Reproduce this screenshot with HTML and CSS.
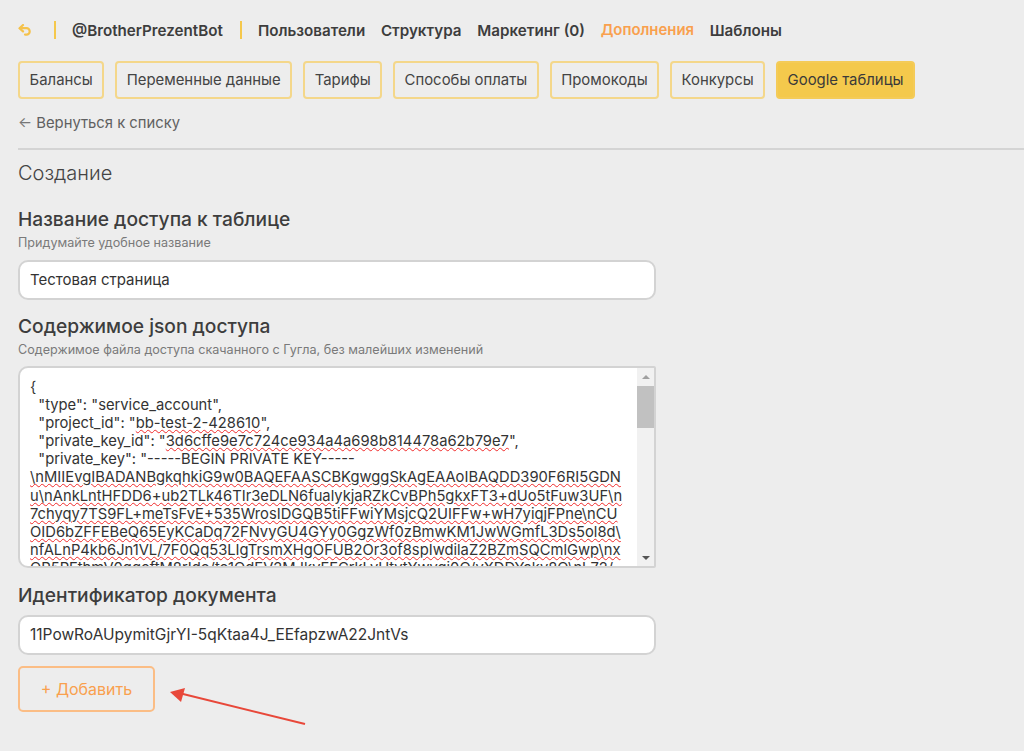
FILE: index.html
```html
<!DOCTYPE html>
<html lang="en">
<head>
    <meta charset="UTF-8">
    <meta name="viewport" content="width=device-width, initial-scale=1.0">
    <title>Google таблицы</title>
    <link rel="stylesheet" href="styles.css">
</head>
<body>
    <div class="container">
        <nav class="top-nav">
            <a class="back-icon">
                <svg width="14" height="12" viewBox="0 0 14 12" fill="none" stroke="#f5c24c" stroke-width="2.2" stroke-linecap="round" stroke-linejoin="round"><path d="M5 1 1.5 4.2 5 7.4"/><path d="M2 4.2h6.5a3.2 3.2 0 0 1 0 6.4H7"/></svg>
            </a>
            <span class="nav-divider first"></span>
            <span class="bot-name">@BrotherPrezentBot</span>
            <span class="nav-divider"></span>
            <a class="nav-link">Пользователи</a>
            <a class="nav-link">Структура</a>
            <a class="nav-link">Маркетинг (0)</a>
            <a class="nav-link active">Дополнения</a>
            <a class="nav-link">Шаблоны</a>
        </nav>

        <div class="tabs">
            <a class="tab">Балансы</a>
            <a class="tab">Переменные данные</a>
            <a class="tab">Тарифы</a>
            <a class="tab">Способы оплаты</a>
            <a class="tab">Промокоды</a>
            <a class="tab">Конкурсы</a>
            <a class="tab active">Google таблицы</a>
        </div>

        <a class="back-link"><span class="back-arrow">←</span> Вернуться к списку</a>
        <hr class="divider">

        <h1 class="page-title">Создание</h1>

        <section class="field">
            <h2 class="field-title">Название доступа к таблице</h2>
            <p class="field-hint">Придумайте удобное название</p>
            <div class="input">Тестовая страница</div>
        </section>

        <section class="field">
            <h2 class="field-title">Содержимое json доступа</h2>
            <p class="field-hint">Содержимое файла доступа скачанного с Гугла, без малейших изменений</p>
            <div class="textarea">
                <div class="textarea-text">
                    <div class="code-line">{</div>
                    <div class="code-line">  "type": "service_account",</div>
                    <div class="code-line">  "project_id": "<span class="typo">bb-test-2-428610</span>",</div>
                    <div class="code-line">  "private_key_id": "<span class="typo">3d6cffe9e7c724ce934a4a698b814478a62b79e7</span>",</div>
                    <div class="code-line">  "private_key": "-----BEGIN PRIVATE KEY-----</div>
                    <div class="code-line typo">\nMIIEvgIBADANBgkqhkiG9w0BAQEFAASCBKgwggSkAgEAAoIBAQDD390F6RI5GDN</div>
                    <div class="code-line typo">u\nAnkLntHFDD6+ub2TLk46TIr3eDLN6fualykjaRZkCvBPh5gkxFT3+dUo5tFuw3UF\n</div>
                    <div class="code-line typo">7chyqy7TS9FL+meTsFvE+535WrosIDGQB5tiFFwiYMsjcQ2UIFFw+wH7yiqjFPne\nCU</div>
                    <div class="code-line typo">OID6bZFFEBeQ65EyKCaDq72FNvyGU4GYy0GgzWf0zBmwKM1JwWGmfL3Ds5ol8d\</div>
                    <div class="code-line typo">nfALnP4kb6Jn1VL/7F0Qq53LIgTrsmXHgOFUB2Or3of8spIwdilaZ2BZmSQCmlGwp\nx</div>
                    <div class="code-line typo">OP5PFthmV0qqoftM8rIdo/to1OdEV2MJkyFFCrkLvUtytYwyqi0Q/yXDDYaky8Q\nL72/</div>
                </div>
                <div class="scrollbar">
                    <span class="scroll-up"></span>
                    <span class="scroll-thumb"></span>
                    <span class="scroll-down"></span>
                </div>
            </div>
        </section>

        <section class="field field-last">
            <h2 class="field-title">Идентификатор документа</h2>
            <div class="input input-id">11PowRoAUpymitGjrYI-5qKtaa4J_EEfapzwA22JntVs</div>
        </section>

        <button class="add-btn">+ Добавить</button>
    </div>

    <svg class="annotation" width="150" height="45" viewBox="0 0 150 45">
        <path d="M140 39 14 8" stroke="#e8483a" stroke-width="2" fill="none"/>
        <path d="M5 7 20 3 16 17Z" fill="#e8483a"/>
    </svg>
</body>
</html>
```

FILE: styles.css
```css
* {
    margin: 0;
    padding: 0;
    box-sizing: border-box;
    font-family: 'Inter', sans-serif;
}

html, body {
    height: 100%;
}

body {
    background: #ededed;
    color: #3b3b3b;
    overflow: hidden;
    position: relative;
}

.container {
    padding: 20px 0 0 18px;
}

.top-nav {
    display: flex;
    align-items: center;
    height: 20px;
    font-size: 15.2px;
    font-weight: 600;
    color: #3d3d3d;
}

.back-icon {
    display: flex;
    width: 36px;
}

.nav-divider {
    width: 2px;
    height: 18px;
    background: #f5c84c;
    margin: 0 16px 0 0;
}

.bot-name {
    margin-right: 17px;
}

.nav-link {
    margin-right: 15.7px;
}

.nav-link.active {
    font-size: 14.9px;
    color: #f9a04e;
}

.tabs {
    display: flex;
    gap: 10.7px;
    margin-top: 21px;
}

.tab {
    display: block;
    height: 38px;
    line-height: 35px;
    padding: 0 9.6px;
    border: 2px solid #f4d78a;
    border-radius: 4px;
    font-size: 14.9px;
    color: #444;
}

.tab.active {
    background: #f4c94c;
    border-color: #f4cb58;
    color: #3a3a3a;
}

.back-link {
    display: block;
    margin-top: 14px;
    height: 20px;
    line-height: 20px;
    font-size: 14.8px;
    color: #606060;
}

.back-arrow {
    color: #777;
}

.divider {
    border: 0;
    height: 2px;
    background: #d4d4d4;
    margin-top: 15px;
}

.page-title {
    font-size: 20px;
    font-weight: 300;
    line-height: 24px;
    margin: 11px 0 22px;
    color: #444;
}

.field {
    width: 638px;
    margin-top: 14px;
}

.field-last {
    margin-top: 15px;
}

.field-title {
    font-size: 19.2px;
    font-weight: 500;
    line-height: 24px;
    color: #3d3d3d;
}

.field-hint {
    font-size: 12.6px;
    line-height: 16px;
    color: #7a7a7a;
    margin-top: 4px;
}

.input {
    height: 40px;
    line-height: 36px;
    margin-top: 9px;
    padding: 0 10px;
    background: #fff;
    border: 2px solid #d3d3d3;
    border-radius: 10px;
    font-size: 15px;
    color: #333;
}

.input-id {
    font-size: 15.5px;
    margin-top: 8px;
}

.textarea {
    display: flex;
    height: 202px;
    margin-top: 8px;
    background: #fff;
    border: 2px solid #d3d3d3;
    border-radius: 10px 2px 2px 10px;
    overflow: hidden;
}

.textarea-text {
    flex: 1;
    padding: 10px 0 0 10px;
    overflow: hidden;
    font-size: 14.75px;
    line-height: 18.1px;
    color: #333;
}

.code-line {
    white-space: pre;
}

.typo {
    text-decoration: underline wavy #f02a2a 1px;
}

.scrollbar {
    width: 17px;
    flex: none;
    background: #f1f1f1;
    display: flex;
    flex-direction: column;
    align-items: center;
}

.scroll-up, .scroll-down {
    width: 0;
    height: 0;
    border-left: 4px solid transparent;
    border-right: 4px solid transparent;
}

.scroll-up {
    border-bottom: 4px solid #a0a0a0;
    margin-top: 7px;
}

.scroll-thumb {
    width: 100%;
    height: 42px;
    background: #c1c1c1;
    margin-top: 6.5px;
}

.scroll-down {
    border-top: 4px solid #555;
    margin-top: auto;
    margin-bottom: 6px;
}

.add-btn {
    display: block;
    width: 137px;
    height: 46px;
    margin-top: 11px;
    background: transparent;
    border: 2px solid #fbbd85;
    border-radius: 5px;
    font-size: 16px;
    color: #f9a04e;
}

.annotation {
    position: absolute;
    left: 165px;
    top: 685px;
}
```
